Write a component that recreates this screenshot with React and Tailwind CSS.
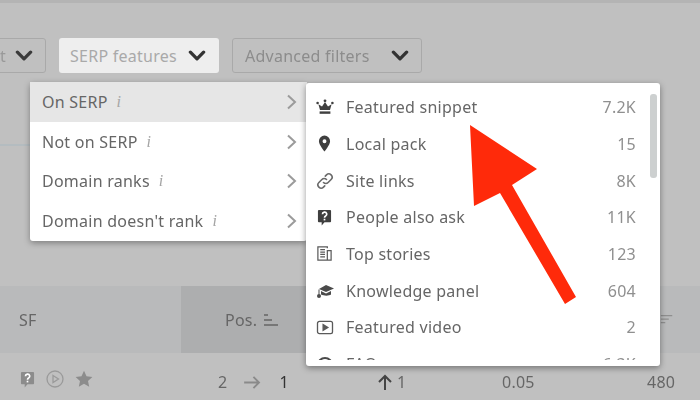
import React from "react";

const Chev = ({ className = "" }) => (
  <svg viewBox="0 0 16 10" className={className} fill="none" stroke="currentColor" strokeWidth="3" strokeLinecap="round" strokeLinejoin="round"><path d="M2 2l6 6 6-6" /></svg>
);
const Right = () => (
  <svg viewBox="0 0 10 16" className="w-[11px] h-[16px] text-[#9b9b9b]" fill="none" stroke="currentColor" strokeWidth="2"><path d="M1.5 1.5l7 6.5-7 6.5" /></svg>
);
const I = () => <span className="italic text-[#a5a5a5] text-[16px] font-['Liberation_Serif',serif]">i</span>;

const Crown = () => (
  <svg viewBox="0 0 18 16" className="w-[18px] h-[18px]" fill="#3f3f3f"><circle cx="9" cy="1.8" r="1.4" /><circle cx="1.6" cy="4" r="1.3" /><circle cx="16.4" cy="4" r="1.3" /><path d="M9 3l3 4.5 3.6-2.3L14 11H4L2.4 5.2 6 7.5z" /><rect x="3.6" y="12.4" width="10.8" height="2.4" /></svg>
);
const Pin = () => (
  <svg viewBox="0 0 14 18" className="w-[13px] h-[17px] ml-[2px]" fill="#3f3f3f"><path fillRule="evenodd" d="M7 0.5a6 6 0 0 1 6 6c0 4-6 11-6 11s-6-7-6-11a6 6 0 0 1 6-6zm0 4a2.1 2.1 0 1 0 0 4.200a2.100 2.100 0 0 0 0-4.200z" /></svg>
);
const LinkIco = () => (
  <svg viewBox="0 0 18 18" className="w-[18px] h-[18px]" fill="none" stroke="#6a6a6a" strokeWidth="1.6" strokeLinecap="round"><path d="M7.500 10.500a3.200 3.200 0 0 0 4.600 0l3-3a3.250 3.250 0 0 0-4.600-4.600l-1.200 1.200" /><path d="M10.500 7.500a3.200 3.200 0 0 0-4.600 0l-3 3a3.250 3.250 0 0 0 4.600 4.600l1.200-1.200" /></svg>
);
const Ask = ({ c = "#3f3f3f" }) => (
  <svg viewBox="0 0 16 18" className="w-[15px] h-[17px] ml-[1px]"><path fill={c} d="M2 1h12a1 1 0 0 1 1 1v11a1 1 0 0 1-1 1H8l-3 3.500V14H2a1 1 0 0 1-1-1V2a1 1 0 0 1 1-1z" /><path fill="none" stroke="#fff" strokeWidth="1.800" d="M5.800 5.500a2.300 2.300 0 1 1 3.400 2c-.9.500-1.200 1-1.200 1.800" /><rect x="7.100" y="10.300" width="1.800" height="1.800" fill="#fff" /></svg>
);
const News = () => (
  <svg viewBox="0 0 18 18" className="w-[17px] h-[17px]" fill="none" stroke="#5a5a5a" strokeWidth="1.300"><path d="M12 3.500V2H2v14h14V6h-4v10" /><path d="M4.500 5h5M4.500 7.500h5M4.500 10h5M4.500 12.500h5" /></svg>
);
const Cap = () => (
  <svg viewBox="0 0 18 16" className="w-[18px] h-[16px]" fill="#4a4a4a"><path d="M10 2L18 5.500 10 9 3 6z" /><path d="M5 8l5 2.500L15 8v3.500c-2 1.500-7 1.500-10 0z" /><path d="M2.500 6.500h1v5h-1z" /><circle cx="3" cy="13" r="2" /></svg>
);
const Play = () => (
  <svg viewBox="0 0 18 16" className="w-[18px] h-[15px]" fill="none" stroke="#5a5a5a" strokeWidth="1.400"><rect x="1" y="1.500" width="16" height="13" rx="2" /><path d="M7 5l5 3-5 3z" fill="#5a5a5a" /></svg>
);
const Faq = () => (
  <svg viewBox="0 0 18 16" className="w-[18px] h-[16px]" fill="none" stroke="#4a4a4a" strokeWidth="2"><path d="M2 9a7 7 0 0 1 14 0" /></svg>
);

const features = [
  [Crown, "Featured snippet", "7.2K"],
  [Pin, "Local pack", "15"],
  [LinkIco, "Site links", "8K"],
  [Ask, "People also ask", "11K"],
  [News, "Top stories", "123"],
  [Cap, "Knowledge panel", "604"],
  [Play, "Featured video", "2"],
  [Faq, "FAQ", "6.3K"],
];

const menu = [
  ["On SERP", true],
  ["Not on SERP", false],
  ["Domain ranks", false],
  ["Domain doesn't rank", false],
];

export default function App() {
  return (
    <div className="w-[700px] h-[400px] overflow-hidden bg-[#c0c0c0]">
      <div className="relative w-[700px] h-[400px] blur-[0.5px] font-['Noto_Sans','Open_Sans',sans-serif] text-[16px] tracking-[0.25px] text-[#666]">
        <div className="h-[3px] bg-[#b4b4b4]" />
        <div className="flex items-start mt-[35px] -ml-[40px] gap-[13px] h-[36px]">
          <div className="w-[86px] h-[35px] border border-[#a9a9a9] rounded-[3px] flex items-center justify-end pr-[12px] gap-[9px] text-[#3a3a3a]">
            <span className="text-[#999]">Sort</span>
            <Chev className="w-[18px] h-[11px]" />
          </div>
          <div className="w-[160px] h-[35px] bg-[#eeeeee] rounded-[3px] flex items-center pl-[11px] gap-[11px] text-[#a9a9a9] text-nowrap">
            SERP features
            <Chev className="w-[18px] h-[11px] text-[#333]" />
          </div>
          <div className="w-[190px] h-[35px] border border-[#a9a9a9] rounded-[3px] flex items-center pl-[12px] justify-between pr-[12px] text-[#8c8c8c] text-nowrap">
            Advanced filters
            <Chev className="w-[18px] h-[11px] text-[#333]" />
          </div>
        </div>
        <div className="h-[2px] w-[30px] bg-[#b4bcc0] mt-[70px]" />

        <div className="flex mt-[140px] h-[67px] bg-[#b9babb] text-[#666]">
          <div className="w-[181px] pl-[19px] flex items-center">SF</div>
          <div className="w-[125px] bg-[#adaeaf] flex items-center pl-[44px] gap-[6px]">
            Pos.
            <svg viewBox="0 0 16 16" className="w-[16px] h-[16px]" stroke="#666" strokeWidth="1.600"><path d="M1 3h4M1 8h8M1 13h14" /></svg>
          </div>
          <div className="flex-1 flex justify-end items-center pr-[26px]">
            <svg viewBox="0 0 16 16" className="w-[14px] h-[14px]" stroke="#8f8f8f" strokeWidth="1.500"><path d="M1 3h13M1 7h9M1 11h5" /></svg>
          </div>
        </div>
        <div className="flex items-center h-[58px] text-[#555]">
          <div className="w-[181px] pl-[19px] flex items-center gap-[11px] -mt-[6px]">
            <Ask c="#8c8c8c" />
            <svg viewBox="0 0 18 18" className="w-[18px] h-[18px]" fill="none" stroke="#9a9a9a" strokeWidth="1.300"><circle cx="9" cy="9" r="8" /><path d="M7 5.500l5.500 3.500L7 12.500z" /></svg>
            <svg viewBox="0 0 18 18" className="w-[18px] h-[18px]" fill="#8c8c8c"><path d="M9 .8l2.500 5.400 5.900.7-4.400 4 1.200 5.800L9 13.800l-5.200 2.900L5 10.900l-4.400-4 5.900-.7z" /></svg>
          </div>
          <div className="w-[197px] pl-[37px] flex items-center gap-[17px] text-[#666]">
            <span>2</span>
            <svg viewBox="0 0 18 14" className="w-[17px] h-[13px]" fill="none" stroke="#8a8a8a" strokeWidth="2"><path d="M0 7h16M10 1l6 6-6 6" /></svg>
            <span className="text-[#333] ml-[1px]">1</span>
          </div>
          <div className="w-[124px] flex items-center gap-[5px] text-[#666]">
            <svg viewBox="0 0 14 16" className="w-[14px] h-[16px]" fill="none" stroke="#444" strokeWidth="2"><path d="M7 16V2M1 8l6-6 6 6" /></svg>
            <span>1</span>
          </div>
          <div className="w-[145px] text-[#666]">0.05</div>
          <div className="text-[#666]">480</div>
        </div>

        {/* dropdown menu */}
        <div className="absolute left-[30px] top-[82px] w-[277px] h-[159px] bg-white rounded-[3px] shadow-[0_2px_6px_rgba(0,0,0,0.35)] text-[#666]">
          {menu.map(([label, active]) => (
            <div key={label} className={`h-[39.750px] flex items-center justify-between pl-[12px] pr-[10px] ${active ? "bg-[#e6e6e6]" : ""}`}>
              <span className="flex items-center gap-[9px]"><span>{label}</span><I /></span>
              <Right />
            </div>
          ))}
        </div>

        {/* submenu */}
        <div className="absolute left-[306px] top-[83px] w-[354px] h-[283px] bg-white rounded-[3px] shadow-[0_2px_6px_rgba(0,0,0,0.4)]">
          <div className="h-[277px] overflow-hidden pt-[6px]">
            {features.map(([Ico, name, n]) => (
              <div key={name} className="h-[36.670px] flex items-center pl-[10px] pr-[24px]">
                <span className="w-[30px] flex"><Ico /></span>
                <span className="flex-1 text-[#666]">{name}</span>
                <span className="text-[#8f8f8f]">{n}</span>
              </div>
            ))}
          </div>
          <div className="absolute right-[3px] top-[11px] w-[7px] h-[84px] rounded-[3px] bg-[#cdd0d0]" />
        </div>

        {/* red arrow */}
        <svg viewBox="0 0 700 400" className="absolute left-0 top-0 w-[700px] h-[400px] pointer-events-none" fill="#ff2a0a">
          <path d="M470 125L537 169 512 185 576 297 565 304 500 193 474 206z" />
        </svg>
      </div>
    </div>
  );
}
